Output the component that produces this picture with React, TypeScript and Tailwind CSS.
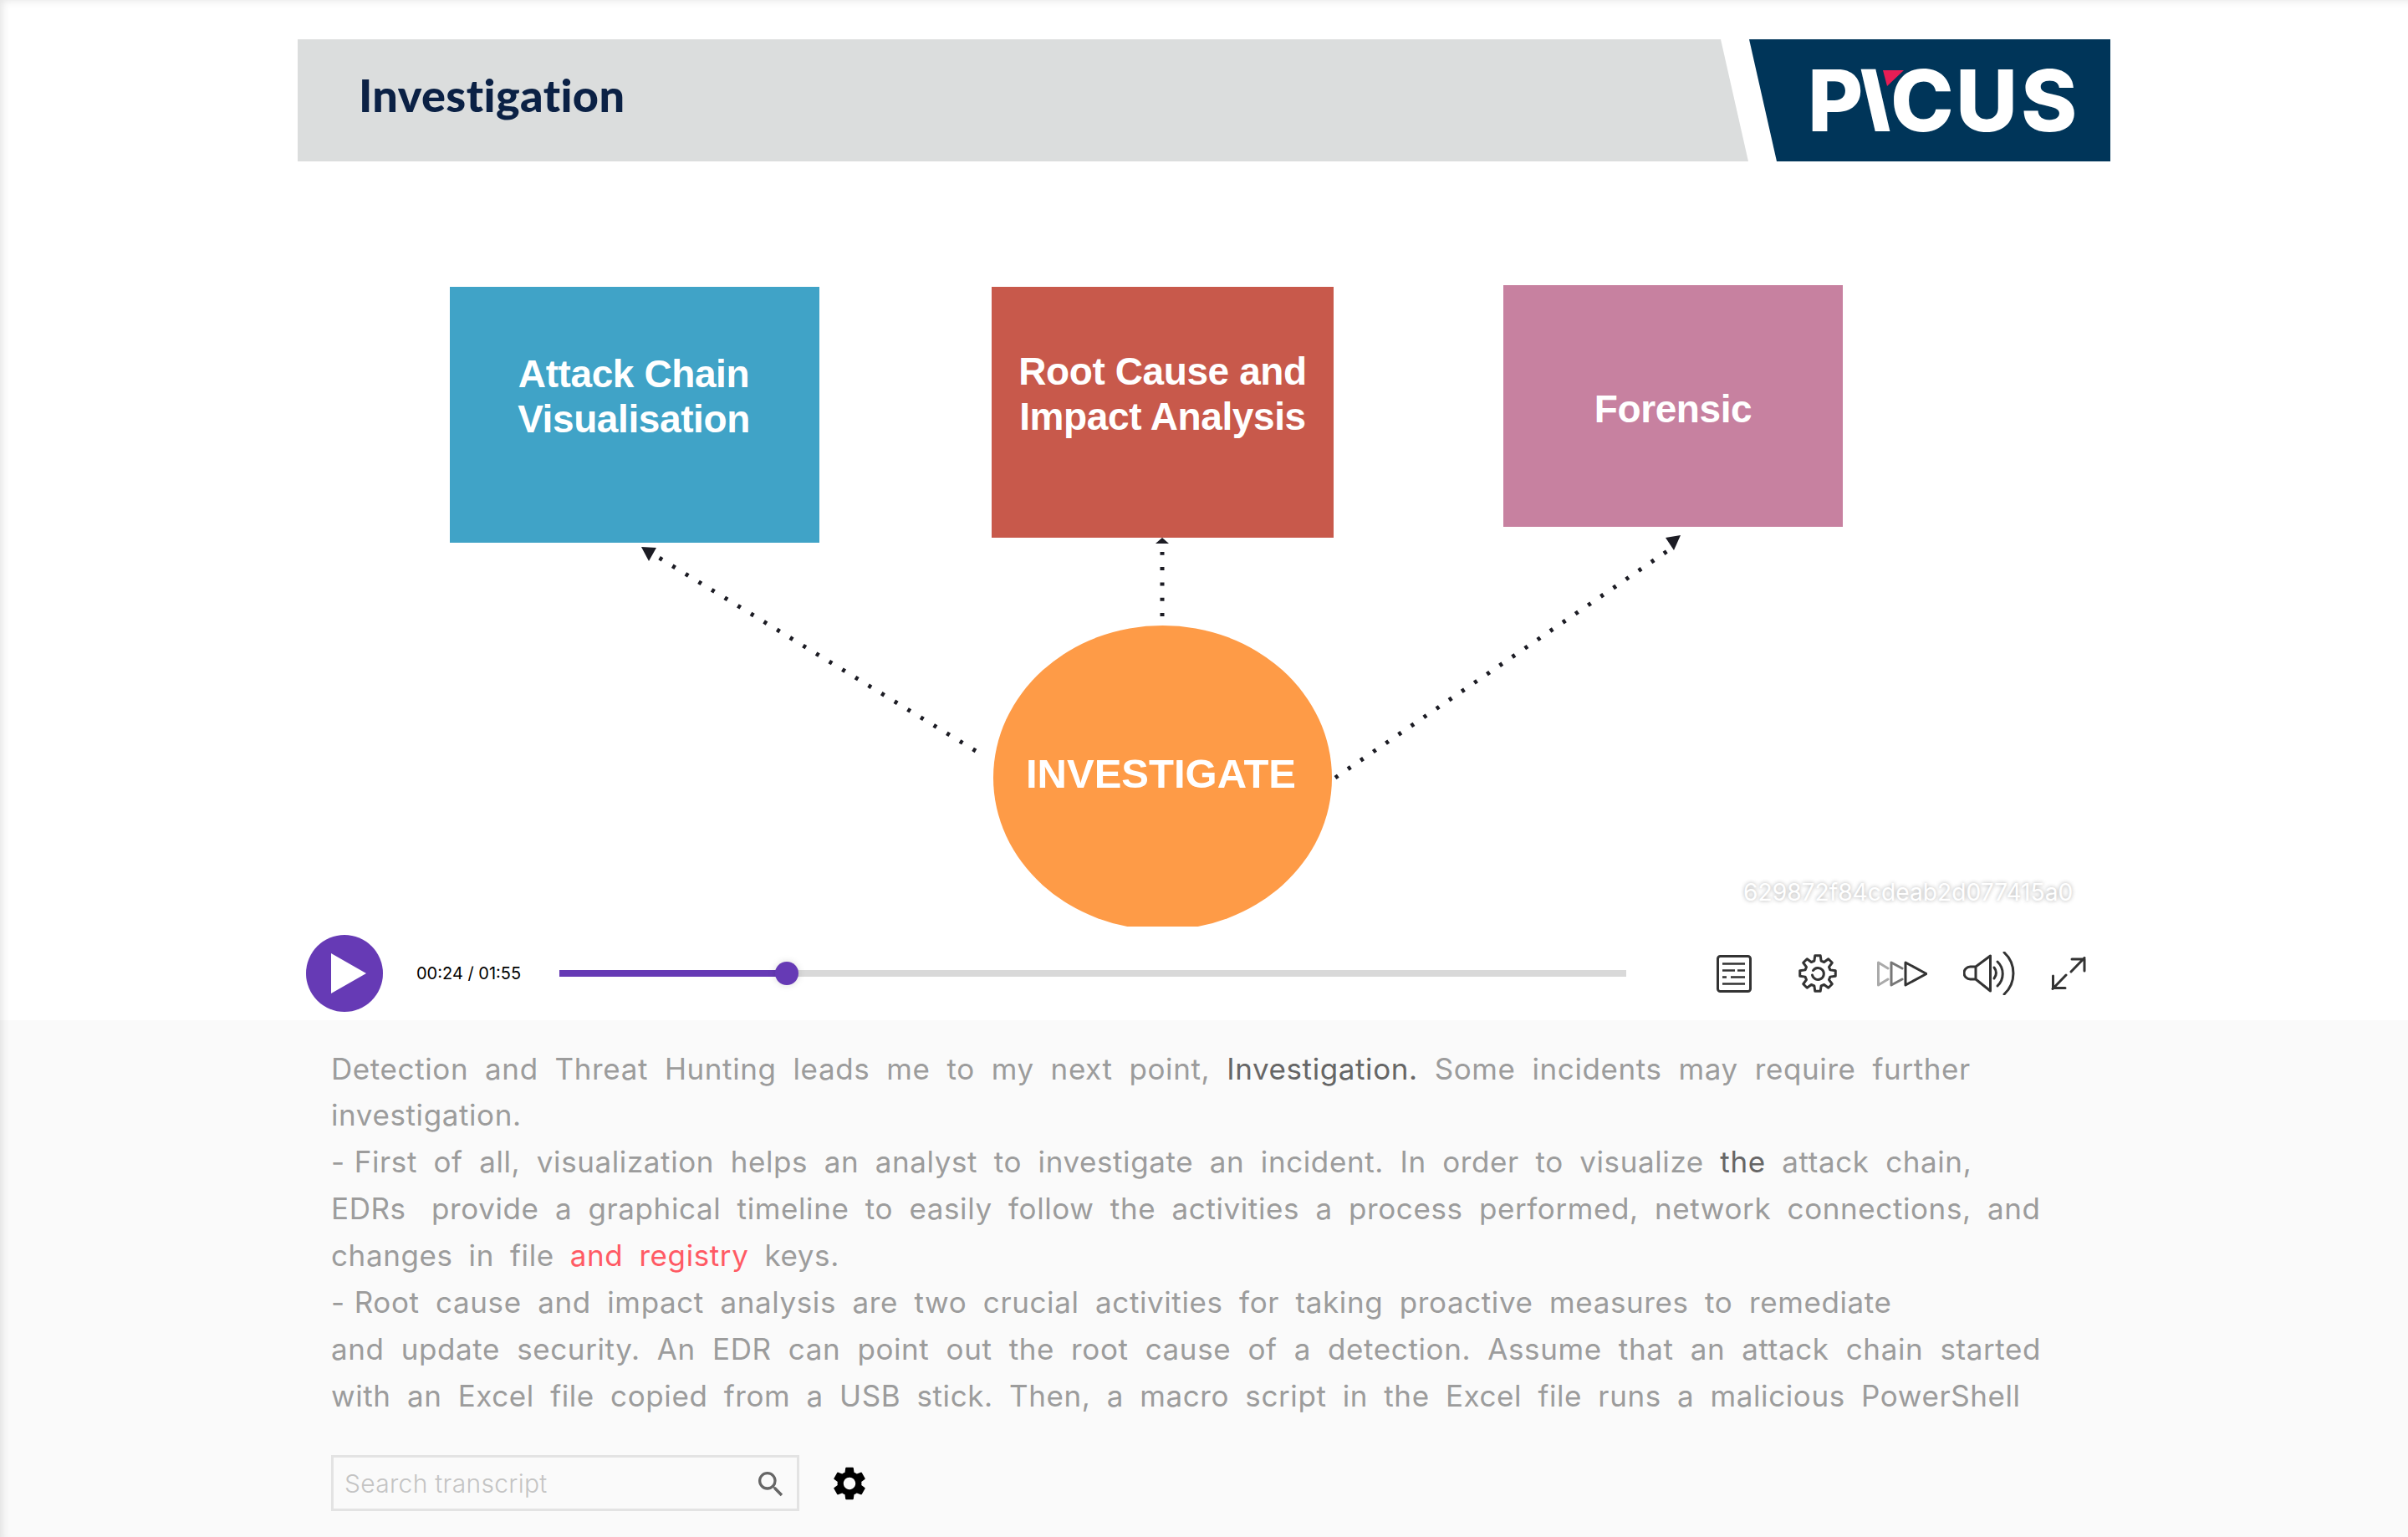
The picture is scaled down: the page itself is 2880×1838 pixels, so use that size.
import React from 'react';
import { MdSearch, MdSettings } from 'react-icons/md';

// cog outline for the player settings button
const cogPath = (() => {
  const teeth = 8;
  const cx = 23;
  const cy = 23;
  const parts: string[] = [];
  for (let i = 0; i < teeth; i++) {
    const a = (i / teeth) * Math.PI * 2 - Math.PI / 2;
    const pt = (r: number, d: number) => {
      const t = a + d;
      return `${(cx + r * Math.cos(t)).toFixed(2)},${(cy + r * Math.sin(t)).toFixed(2)}`;
    };
    parts.push(`${i === 0 ? 'M' : 'L'}${pt(15.5, -0.27)}`, `L${pt(21.5, -0.15)}`, `L${pt(21.5, 0.15)}`, `L${pt(15.5, 0.27)}`);
  }
  return parts.join(' ') + ' Z';
})();

const TranscriptIcon = () => (
  <svg width="42" height="45" viewBox="0 0 42 45" fill="none" stroke="#333" strokeWidth="3" className="shrink-0">
    <rect x="1.5" y="1.5" width="39" height="42" rx="3" />
    <path d="M7 10.5H34M7 18.5H22M25 18.5H34M7 26.5H12M17 26.5H34M7 34.5H34" strokeWidth="2.5" />
  </svg>
);

const CogIcon = () => (
  <svg width="46" height="46" viewBox="0 0 46 46" fill="none" stroke="#333" strokeWidth="3" strokeLinejoin="round" strokeLinecap="round" className="shrink-0">
    <path d={cogPath} />
    <path d="M17.5 19.5A7 7 0 1 1 16.5 25" />
  </svg>
);

const SpeedIcon = () => (
  <svg width="60" height="31" viewBox="0 0 60 31" fill="none" strokeWidth="3" strokeLinejoin="round" strokeLinecap="round" className="shrink-0">
    <path d="M13 9L1.5 2V29L13 22" stroke="#aaa" />
    <path d="M30 9L17 2V29L30 22" stroke="#777" />
    <path d="M34 2L59 15.5L34 29Z" stroke="#333" />
  </svg>
);

const VolumeIcon = () => (
  <svg width="64" height="52" viewBox="0 0 64 52" fill="none" stroke="#333" strokeWidth="3" strokeLinejoin="round" strokeLinecap="round" className="shrink-0">
    <path d="M15 18L32.5 5V47L15 33H8.5A7.5 7.5 0 0 1 8.5 18H15V33" />
    <path d="M37 19A10 10 0 0 1 37 32" />
    <path d="M41 12A20 20 0 0 1 41 41" />
    <path d="M49 1A34 34 0 0 1 49 51" />
  </svg>
);

const ExpandIcon = () => (
  <svg width="42" height="40" viewBox="0 0 42 40" fill="none" stroke="#333" strokeWidth="3" strokeLinecap="round" strokeLinejoin="round" className="shrink-0">
    <path d="M40 1.5L24 18M25 3H40V17" />
    <path d="M2 38.5L18 22M17 37.5H2.5V23" />
  </svg>
);

const DiagramBox = ({ className, lines }: { className: string; lines: string[] }) => (
  <div className={`absolute flex flex-col items-center font-['Liberation_Sans',sans-serif] text-[46px] leading-[54px] font-bold tracking-[-0.4px] text-white ${className}`}>
    {lines.map((line) => (
      <span key={line}>{line}</span>
    ))}
  </div>
);

const Arrows = () => (
  <svg className="absolute top-0 left-0" width="2880" height="1108" fill="none">
    <g stroke="#1c1c24" strokeWidth="5" strokeDasharray="4 14.3" strokeLinecap="butt">
      <path d="M1167 898L785 665" />
      <path d="M1390 737V660" />
      <path d="M1597 930L2000 655" />
    </g>
    <g fill="#1c1c24">
      <path d="M767 654L785 655L776 671Z" />
      <path d="M1390 643L1398 650H1382Z" />
      <path d="M2010 640L1992 643L2002 658Z" />
    </g>
  </svg>
);

const Logo = () => (
  <div className="relative ml-px flex h-[146px] w-[432px] items-center bg-[#003559] pl-[70px] font-['Inter',sans-serif] text-[102px] font-extrabold text-white [clip-path:polygon(0_0,100%_0,100%_100%,33px_100%)]">
    <span className="w-[63px] leading-none">P</span>
    <span className="w-[36px] skew-x-[13deg] text-center leading-none">I</span>
    <span className="w-[78px] leading-none">C</span>
    <span className="w-[78px] leading-none">U</span>
    <span className="leading-none">S</span>
    <svg className="absolute top-[37px] left-[160px]" width="25" height="19" viewBox="0 0 25 19">
      <path d="M0 0H25L5 19Z" fill="#e81e55" />
    </svg>
  </div>
);

const dark = 'text-[#666]';

const App: React.FC = () => {
  return (
    <div className="relative flex h-[1838px] w-full flex-col overflow-hidden bg-white font-['Inter',sans-serif]">
      {/* slide */}
      <section className="relative h-[1108px] shrink-0 overflow-hidden">
        <header className="flex pt-[47px] pl-[356px]">
          <div className="flex h-[146px] w-[1735px] items-center bg-[#dbdddd] pb-[13px] pl-[73px] [clip-path:polygon(0_0,1702px_0,100%_100%,0_100%)]">
            <h1 className="font-['Lato',sans-serif] text-[54px] font-black tracking-[0.4px] text-[#0b2145]">Investigation</h1>
          </div>
          <Logo />
        </header>

        <Arrows />

        <DiagramBox className="top-[343px] left-[538px] h-[306px] w-[442px] bg-[#40a3c7] pt-[77px] pr-[2px]" lines={['Attack Chain', 'Visualisation']} />
        <DiagramBox className="top-[343px] left-[1186px] h-[300px] w-[409px] bg-[#c8594b] pt-[74px]" lines={['Root Cause and', 'Impact Analysis']} />
        <DiagramBox className="top-[341px] left-[1798px] h-[289px] w-[406px] bg-[#c781a0] pt-[121px]" lines={['Forensic']} />

        <div className="absolute top-[748px] left-[1188px] flex h-[364px] w-[405px] justify-center rounded-[50%] bg-[#fe9b47] pt-[150px] pr-[4px] font-['Liberation_Sans',sans-serif] text-[49px] leading-[54px] font-bold text-white">
          INVESTIGATE
        </div>

        <div className="absolute top-[1050px] left-[2085px] text-[28.2px] leading-[34px] text-white [text-shadow:0_0_5px_rgba(0,0,0,0.35)]">
          629872f84cdeab2d077415a0
        </div>
      </section>

      {/* player controls */}
      <div className="flex h-[112px] shrink-0 items-center pl-[366px]">
        <button className="flex h-[92px] w-[92px] shrink-0 items-center justify-center rounded-full bg-[#663ab5] pl-[10px]">
          <svg width="42" height="48" viewBox="0 0 42 48">
            <path d="M0 0L42 24L0 48Z" fill="#fff" />
          </svg>
        </button>
        <span className="ml-10 w-[171px] shrink-0 text-[20px] text-black">00:24 / 01:55</span>
        <div className="relative h-2 w-[1276px] shrink-0 bg-[#d9d9d9]">
          <div className="h-full w-[272px] bg-[#663ab5]" />
          <div className="absolute top-[-10px] left-[258px] h-7 w-7 rounded-full bg-[#663ab5] shadow-[0_0_8px_rgba(0,0,0,0.15)]" />
        </div>
        <div className="ml-[108px]">
          <TranscriptIcon />
        </div>
        <div className="ml-[56px]">
          <CogIcon />
        </div>
        <div className="ml-[48px]">
          <SpeedIcon />
        </div>
        <div className="ml-[43px]">
          <VolumeIcon />
        </div>
        <div className="ml-[41px]">
          <ExpandIcon />
        </div>
      </div>

      {/* transcript */}
      <section className="flex-1 bg-[#fafafa] pt-[30.5px] pl-[396px]">
        <div className="whitespace-pre text-[35px] leading-[55.9px] font-normal tracking-[0.6px] text-[#9c9c9c]">
          <p className="[word-spacing:9.5px]">
            Detection and Threat Hunting leads me to my next point, <span className={dark}>Investigation.</span> Some incidents may require further
          </p>
          <p className="[word-spacing:9.5px]">investigation.</p>
          <p className="[word-spacing:9.1px]">
            -<span className="ml-[11px]">First of all, visualization helps an analyst to investigate an incident. In order to visualize </span>
            <span className={dark}>the</span> attack chain,
          </p>
          <p className="[word-spacing:8.9px]">
            EDRs <span className="ml-[11px]">provide a graphical timeline to easily follow the activities a process performed, network connections, and</span>
          </p>
          <p className="[word-spacing:8.6px]">
            changes in file <span className="text-[#ff5a64]">and registry</span> keys.
          </p>
          <p className="[word-spacing:9.1px]">
            -<span className="ml-[11px]">Root cause and impact analysis are two crucial activities for taking proactive measures to remediate</span>
          </p>
          <p className="[word-spacing:9.7px]">and update security. An EDR can point out the root cause of a detection. Assume that an attack chain started</p>
          <p className="[word-spacing:8.8px]">with an Excel file copied from a USB stick. Then, a macro script in the Excel file runs a malicious PowerShell</p>
        </div>

        <div className="mt-[42.5px] flex items-center">
          <div className="relative h-[67px] w-[560px]">
            <input
              placeholder="Search transcript"
              className="h-full w-full border-[3px] border-[#e3e3e3] pl-[13px] text-[30px] font-light tracking-[0.3px] outline-none placeholder:text-[#c4c4c4]"
            />
            <MdSearch className="absolute top-[15px] right-[14px] text-[40px] text-[#666]" />
          </div>
          <MdSettings className="ml-[36px] text-[48px] text-black" />
        </div>
      </section>

      {/* soft edge from the page frame */}
      <div className="pointer-events-none absolute inset-0 shadow-[inset_6px_4px_10px_-3px_rgba(0,0,0,0.1)]" />
    </div>
  );
};

export default App;
